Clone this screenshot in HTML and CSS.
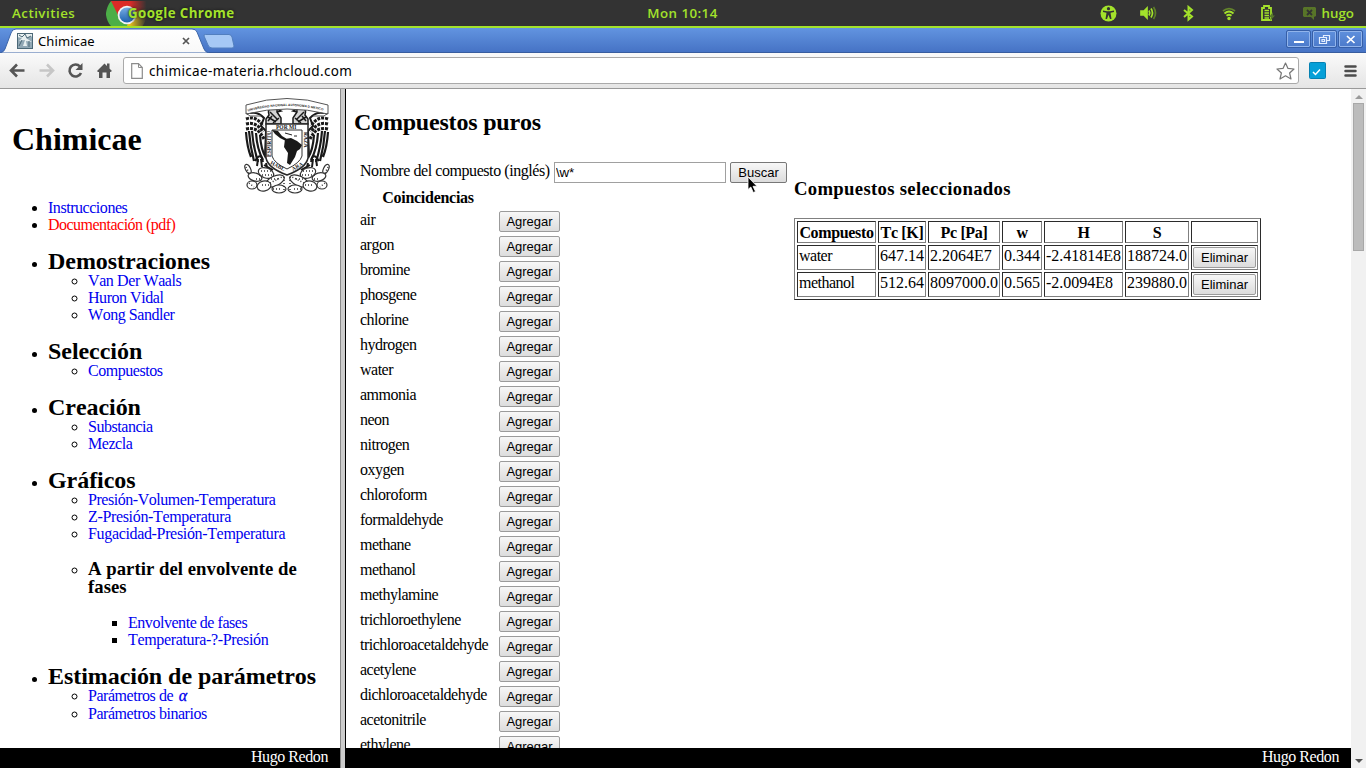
FILE: index.html
```html
<!DOCTYPE html>
<html lang="es">
<head>
<meta charset="utf-8">
<title>Chimicae</title>
<link rel="stylesheet" href="styles.css">
</head>
<body>
<header class="topbar">
  <span class="activities">Activities</span>
  <div class="app">
    <svg class="chrome-logo" width="46" height="25" viewBox="0 0 46 25">
      <defs><linearGradient id="fade"><stop offset="0.52" stop-color="#333" stop-opacity="0"/><stop offset="0.88" stop-color="#333"/></linearGradient>
      <linearGradient id="lens" x2="0" y2="1"><stop offset="0" stop-color="#79aee6"/><stop offset="1" stop-color="#1c60ae"/></linearGradient></defs>
      <circle cx="20.500" cy="13" r="20" fill="#e5c01e"/>
      <path d="M20.500 13 12 19 2 3 10-10H42V7Z" fill="#dc2b27"/>
      <path d="M5 0 14 18 22 22 18 34H0V0Z" fill="#4cae47"/>
      <path d="M0 0H5Q1 5 0 12Z" fill="#333"/><path d="M0 14Q1 21 5 25H0Z" fill="#333"/>
      <circle cx="21" cy="14" r="9.300" fill="#f3f3f3"/><circle cx="21" cy="14" r="7.600" fill="url(#lens)"/>
      <rect width="46" height="25" fill="url(#fade)"/>
    </svg>
    <span class="app-name">Google Chrome</span>
  </div>
  <span class="clock">Mon 10:14</span>
  <div class="tray">
    <svg width="17" height="17" viewBox="0 0 17 17"><circle cx="8.500" cy="8.500" r="8" fill="#a3e22b"/><circle cx="8.500" cy="3.700" r="1.600" fill="#333"/><path d="M3 5.500 7 6.200H10L14 5.500V7L10.500 7.700 11.500 14H10L8.500 9.800 7 14H5.500L6.500 7.700 3 7Z" fill="#333"/></svg>
    <svg width="17" height="16" viewBox="0 0 17 16" fill="none" stroke="#a3e22b" stroke-width="1.700"><path d="M1 6H4L7 3V13L4 10H1Z" fill="#a3e22b"/><path d="M9 5.500Q10.500 8 9 10.500M11 3.500Q14 8 11 12.500"/><path d="M13.500 2Q17.500 8 13.500 14" stroke="#5d7f27"/></svg>
    <svg width="11" height="17" viewBox="0 0 11 17" fill="none" stroke="#a3e22b" stroke-width="2"><path d="M1 5 9 11.500 5.500 14.500V2L9 5 1 12"/></svg>
    <svg width="14" height="15" viewBox="0 0 14 15" fill="none" stroke="#a3e22b" stroke-width="1.800"><path d="M1 5Q7 .2 13 5" stroke="#64852c"/><path d="M2.500 7.500Q7 3.500 11.500 7.500M4.500 9.800Q7 7.800 9.500 9.800"/><circle cx="7" cy="12.500" r="1.700" fill="#a3e22b" stroke="none"/></svg>
    <svg width="14" height="17" viewBox="0 0 14 17"><path d="M1 3H3V1H8V3H10V15H1Z" fill="none" stroke="#a3e22b" stroke-width="1.800"/><path d="M3.500 5.500H8M3.500 8H8M3.500 10.500H8M3.500 13H8" stroke="#a3e22b" stroke-width="1.500"/><path d="M12 7 8 12H10L9 16 14 10.500H12Z" fill="#58772c"/></svg>
    <div class="user"><svg width="15" height="15" viewBox="0 0 15 15"><path d="M2 1H13L14 2V10L12 11V14L9 11H2L1 10V2Z" fill="#587528"/><path d="M5 4 10 9M10 4 5 9" stroke="#333" stroke-width="1.800"/></svg><span>hugo</span></div>
  </div>
</header>

<div class="tabstrip">
  <svg class="tab-shape" width="240" height="25" viewBox="0 0 240 25">
    <defs><linearGradient id="tabfill" x2="0" y2="1"><stop offset="0" stop-color="#fff"/><stop offset="1" stop-color="#f8f8f8"/></linearGradient></defs>
    <path d="M0 25Q4 24 5 21L11 5Q12 1 16 1H192Q196 1 197 4L204 21Q205 24 209 25Z" fill="url(#tabfill)" stroke="#3c65a9"/>
    <path d="M205.500 6.500H229Q231 6.500 232 9L234 18Q234 20 232 20H212Q209 20 208 17L204 8Q203.500 6.500 205.500 6.500Z" fill="#a6c8f5" stroke="#527fbf"/>
  </svg>
  <div class="tab">
    <svg width="16" height="16" viewBox="0 0 16 16"><rect width="16" height="16" fill="#91a8b5"/><path d="M0 1H16V3L9 5 15 9 9 8 10 13H6L8 7 2 8 5 5 0 4Z" fill="#e7eff0"/><path d="M2 2 5 4 8 1 10 5 14 3M5 7 2 13M12 8V14" stroke="#4b6877" fill="none"/><rect x=".5" y=".5" width="15" height="15" fill="none" stroke="#4b6877"/></svg>
    <span class="tab-title">Chimicae</span>
    <svg class="tab-close" width="8" height="8" viewBox="0 0 8 8"><path d="M1 1 7 7M7 1 1 7" stroke="#555" stroke-width="1.700"/></svg>
  </div>
  <div class="window-buttons">
    <span class="wbtn"><svg width="22" height="16"><path d="M6 10H16" stroke="#fff" stroke-width="2"/></svg></span>
    <span class="wbtn"><svg width="22" height="16" fill="none" stroke="#e4efff" stroke-width="1.200"><path d="M9.500 5.500V3.500H15.500V8.500H12.500M5.500 5.500H12.500V11.500H5.500ZM8 7.500H10.500V9.500H8Z"/></svg></span>
    <span class="wbtn"><svg width="22" height="16"><path d="M7 4 14.500 11M14.500 4 7 11" stroke="#fff" stroke-width="1.700"/></svg></span>
  </div>
</div>

<div class="toolbar">
  <svg class="nav" width="112" height="36" viewBox="0 0 112 36" fill="none" stroke="#555" stroke-width="2.600">
    <path d="M24.500 17.500H11.500M17 11.500 11 17.500 17 23.500"/><path d="M39.500 17.500H52.500M47 11.500 53 17.500 47 23.500" stroke="#c6c6c6"/>
    <path d="M80 13.500A6 6 0 1 0 81 20"/><path d="M82.500 10V17H75.500Z" fill="#555" stroke="none"/>
    <path d="M97 18 104.500 10.500 107 13V10.500H109.500V15.500L112 18 110.500 19H110V25H106.500V19.500H102.500V25H99V19H98Z" fill="#555" stroke="none"/>
  </svg>
  <div class="omnibox">
    <svg width="12" height="16" viewBox="0 0 12 16"><path d="M.7.700H7.500L11.300 4.500V15.300H.7Z" fill="#fff" stroke="#8c8c8c" stroke-width="1.200"/><path d="M7.500.700V4.500H11.300" fill="none" stroke="#8c8c8c"/></svg>
    <span class="url">chimicae-materia.rhcloud.com</span>
    <svg class="star" width="19" height="18" viewBox="0 0 19 18"><path d="M9.500 1 12 6.400 18 7 13.600 11 15 17 9.500 13.800 4 17 5.400 11 1 7 7 6.400Z" fill="#fff" stroke="#777" stroke-width="1.200" stroke-linejoin="round"/></svg>
  </div>
  <svg class="ext" width="17" height="17" viewBox="0 0 17 17"><rect x=".5" y=".5" width="16" height="16" rx="1" fill="#06a0d8" stroke="#0581b2"/><path d="M4 10 6.500 12.500 11 7.500" fill="none" stroke="#fff" stroke-width="1.500"/></svg>
  <svg width="13" height="14" viewBox="0 0 13 14"><path d="M1.500 2.500H11.500M1.500 7H11.500M1.500 11.500H11.500" stroke="#4c4c4c" stroke-width="2.500" stroke-linecap="round"/></svg>
</div>

<main class="frames">
  <aside class="side">
    <div class="brand">
      <h1>Chimicae</h1>
      <svg class="crest" width="86" height="98" viewBox="0 0 86 98">
        <defs>
          <path id="motto" d="M4 14.500Q43 3.500 83 14.500"/>
          <g id="wing" fill="none" stroke="#191919">
            <path d="M3 17Q13 13 20 21L17 29 22 34 21 58" stroke-width="2"/>
            <path d="M2 22Q12 18 19 29M2 27Q12 24 19 35M2 32Q14 29 20 42" stroke-width="3" stroke-dasharray="3 1"/>
            <path d="M2 35Q3 50 7 60M5 34Q6 49 10 64M8 34Q9 49 14 65M12 36Q13 52 19 63M16 38Q17 53 22 61" stroke-width="2.200"/>
            <path d="M11 64Q17 54 19 65M14 62 13 69M17 62 18 70M20 68 29 73M18 71 27 77M22 66 25 78" stroke-width="2"/>
            <path d="M25 18Q23 11 29 9 34 9 33 15L37 21V27H22V22Z" fill="#d5d5d5" stroke-width="1.500"/>
            <path d="M33 12 37 14 33 15M24 20 32 25M26 15 34 23M24 24 28 19M29 26 35 21" stroke-width="1.500"/>
          </g>
          <g id="cactus" fill="#fff" stroke="#333" stroke-width="1.200">
            <ellipse cx="4" cy="72" rx="2.500" ry="5" transform="rotate(-25 4 72)"/><ellipse cx="11" cy="80" rx="7" ry="4" transform="rotate(15 11 80)"/><ellipse cx="22" cy="76" rx="8" ry="5" transform="rotate(20 22 76)"/><ellipse cx="31" cy="84" rx="10" ry="5" transform="rotate(-25 31 84)"/><ellipse cx="8" cy="88" rx="5" ry="4"/><ellipse cx="20" cy="89" rx="7" ry="5" transform="rotate(-12 20 89)"/><ellipse cx="35" cy="92" rx="7" ry="4"/>
            <path d="M2 70 5 76M5 86 10 90M17 74H27M15 78H29M12 82H18M18 88H25M26 86 38 80M29 92H38M24 82H34M40 80V94" stroke-width="1.500" stroke-dasharray="1 2"/>
          </g>
        </defs>
        <use href="#wing"/><use href="#wing" transform="matrix(-1 0 0 1 86 0)"/>
        <use href="#cactus"/><use href="#cactus" transform="matrix(-1 0 0 1 86 0)"/>
        <path d="M2 8Q43-5 84 8V17Q43 7 2 17ZM2 16 6 19 17 19M84 16 80 19 69 19" fill="#fff" stroke="#555"/>
        <text class="crest-banner"><textPath href="#motto">UNIVERSIDAD NACIONAL AUTONOMA D MEXICO</textPath></text>
        <path d="M22 27H64V61Q62 71 43 78 24 71 22 61Z" fill="#fff" stroke="#292929" stroke-width="1.500"/>
        <path d="M28 33H58V59Q56 66 43 72 30 66 28 59Z" fill="#fff" stroke="#333"/>
        <path d="M28 33 34 34 38 39 43 42 42 44 36 41 31 37ZM41 42 47 41 53 44 58 48 56 52 53 54 51 60 46 68 43 66 44 56 40 50Z" fill="#191919"/>
        <path d="M41 36 48 38M50 39H53" stroke="#222"/>
        <text class="crest-text" x="32" y="32.300">POR  MI</text>
        <text class="crest-text" transform="translate(59.500 35) rotate(90)">RAZA</text>
        <text class="crest-text" transform="translate(26.500 60) rotate(-90)">ESPIRITU</text>
        <text class="crest-text" transform="translate(26 67) rotate(27)">HABL</text>
        <text class="crest-text" transform="translate(49 74) rotate(-30)">ARA</text>
      </svg>
    </div>
    <ul class="menu">
      <li><a>Instrucciones</a></li>
      <li><a class="red">Documentación (pdf)</a></li>
      <li class="section"><h2>Demostraciones</h2><ul><li><a class="roomy">Van Der Waals</a></li><li><a>Huron Vidal</a></li><li><a>Wong Sandler</a></li></ul></li>
      <li class="section"><h2>Selección</h2><ul><li><a>Compuestos</a></li></ul></li>
      <li class="section"><h2>Creación</h2><ul><li><a>Substancia</a></li><li><a>Mezcla</a></li></ul></li>
      <li class="section"><h2>Gráficos</h2><ul><li><a>Presión-Volumen-Temperatura</a></li><li><a class="wide">Z-Presión-Temperatura</a></li><li><a class="wide">Fugacidad-Presión-Temperatura</a></li>
        <li class="subsection"><h3>A partir del envolvente de fases</h3><ul><li><a>Envolvente de fases</a></li><li><a class="wide">Temperatura-?-Presión</a></li></ul></li></ul></li>
      <li class="section"><h2>Estimación de parámetros</h2><ul><li class="alpha"><a>Parámetros de <i>α</i></a></li><li><a>Parámetros binarios</a></li></ul></li>
    </ul>
    <footer class="foot">Hugo Redon</footer>
  </aside>
  <div class="divider"></div>
  <section class="content">
    <h2 class="page-title">Compuestos puros</h2>
    <div class="columns">
      <div class="search">
        <div class="search-row"><label>Nombre del compuesto (inglés)</label><input type="text" value="\w*"><button class="find">Buscar</button></div>
        <div class="matches-title">Coincidencias</div>
        <div class="match"><span>air</span><button>Agregar</button></div>
        <div class="match"><span>argon</span><button>Agregar</button></div>
        <div class="match"><span>bromine</span><button>Agregar</button></div>
        <div class="match"><span>phosgene</span><button>Agregar</button></div>
        <div class="match"><span>chlorine</span><button>Agregar</button></div>
        <div class="match"><span>hydrogen</span><button>Agregar</button></div>
        <div class="match"><span>water</span><button>Agregar</button></div>
        <div class="match"><span>ammonia</span><button>Agregar</button></div>
        <div class="match"><span>neon</span><button>Agregar</button></div>
        <div class="match"><span>nitrogen</span><button>Agregar</button></div>
        <div class="match"><span>oxygen</span><button>Agregar</button></div>
        <div class="match"><span>chloroform</span><button>Agregar</button></div>
        <div class="match"><span>formaldehyde</span><button>Agregar</button></div>
        <div class="match"><span>methane</span><button>Agregar</button></div>
        <div class="match"><span>methanol</span><button>Agregar</button></div>
        <div class="match"><span>methylamine</span><button>Agregar</button></div>
        <div class="match"><span>trichloroethylene</span><button>Agregar</button></div>
        <div class="match"><span>trichloroacetaldehyde</span><button>Agregar</button></div>
        <div class="match"><span>acetylene</span><button>Agregar</button></div>
        <div class="match"><span>dichloroacetaldehyde</span><button>Agregar</button></div>
        <div class="match"><span>acetonitrile</span><button>Agregar</button></div>
        <div class="match"><span>ethylene</span><button>Agregar</button></div>
      </div>
      <div class="selected">
        <h3>Compuestos seleccionados</h3>
        <table>
          <colgroup><col class="c1"><col class="c2"><col class="c3"><col class="c4"><col class="c5"><col class="c6"><col class="c7"></colgroup>
          <tr><th>Compuesto</th><th>Tc [K]</th><th>Pc [Pa]</th><th>w</th><th>H</th><th>S</th><th></th></tr>
          <tr><td class="name">water</td><td>647.14</td><td>2.2064E7</td><td>0.344</td><td>-2.41814E8</td><td>188724.0</td><td><button>Eliminar</button></td></tr>
          <tr><td class="name">methanol</td><td>512.64</td><td>8097000.0</td><td>0.565</td><td>-2.0094E8</td><td>239880.0</td><td><button>Eliminar</button></td></tr>
        </table>
      </div>
    </div>
    <footer class="foot">Hugo Redon</footer>
  </section>
  <div class="scrollbar"><i class="up"></i><div class="thumb"></div><i class="down"></i></div>
</main>
<svg class="pointer" width="12" height="18" viewBox="0 0 12 18"><path d="M1 1V13.500L3.800 11 6.300 16.500 8.500 15.500 6 10.300H10Z" fill="#000" stroke="#fff" stroke-width=".8"/></svg>
</body>
</html>
```
FILE: styles.css
```css
* { box-sizing: border-box; }
body { margin: 0; width: 1366px; height: 768px; overflow: hidden; display: flex; flex-direction: column; background: #fff; color: #000; font: 16px/17px "Liberation Serif", serif; font-kerning: none; }
svg { display: block; flex: none; }

.topbar { height: 28px; flex: none; display: grid; grid-template-columns: 106px 494px 165px 1fr; align-items: center; background: #333; border-bottom: 2px solid #a3e22b; color: #a3e22b; font: 600 13.300px/26px "Open Sans", sans-serif; }
.activities { padding-left: 12px; letter-spacing: 0.500px; }
.app { display: flex; align-items: center; }
.app-name { margin-left: -24px; font-weight: 700; letter-spacing: 0.400px; text-shadow: 0 0 3px #111; white-space: nowrap; }
.clock { text-align: center; letter-spacing: 0.450px; }
.tray { display: flex; align-items: center; justify-content: flex-end; padding-right: 12px; }
.tray > svg:nth-child(1) { margin-right: 23px; }
.tray > svg:nth-child(2) { margin-right: 26px; }
.tray > svg:nth-child(3) { margin-right: 28px; }
.tray > svg:nth-child(4) { margin-right: 25px; }
.tray > svg:nth-child(5) { margin-right: 27px; }
.user { display: flex; align-items: center; gap: 5px; }

.tabstrip { height: 25px; flex: none; display: grid; grid-template-columns: 240px 1fr; background: linear-gradient(#6294e0, #4673c5); border-bottom: 1px solid #385d9f; font: 13px/22px "Noto Sans", sans-serif; }
.tab-shape { grid-area: 1 / 1; }
.tab { grid-area: 1 / 1; z-index: 1; display: flex; align-items: center; padding: 1px 0 0 17px; height: 25px; }
.tab-title { margin-left: 5px; width: 144px; letter-spacing: 0.100px; }
.window-buttons { grid-area: 1 / 2; display: flex; justify-content: flex-end; gap: 3px; padding: 3px 4px 0 0; }
.wbtn { width: 23px; height: 16px; border: 1px solid #91b4eb; outline: 1px solid #365fa8; border-radius: 1px; }

.toolbar { height: 36px; flex: none; display: flex; align-items: center; background: linear-gradient(#fafafa, #e5e5e5); border-bottom: 1px solid #999; padding-right: 9px; }
.nav { width: 112px; }
.omnibox { margin: 0 10px 0 11px; width: 1176px; height: 27px; display: flex; align-items: center; background: #fff; border: 1px solid #aaa; border-radius: 3px; padding: 0 3px 0 7px; }
.url { flex: 1; margin-left: 6px; font: 13.500px/22px "Noto Sans", sans-serif; letter-spacing: 0.370px; }
.ext { margin-right: 18px; }

.frames { flex: 1; min-height: 0; display: grid; grid-template-columns: 340px 6px 1005px 15px; }
.side, .content { position: relative; overflow: hidden; }
.divider { background: #ccc; border-left: 1px solid #888; border-right: 1px solid #000; }
.brand { display: flex; justify-content: space-between; height: 110px; padding: 8px 10px 0 12px; }
h1 { margin: 24px 0 0; font-size: 32px; line-height: 36px; }
ul { margin: 0; padding-left: 40px; }
.menu { padding-left: 48px; letter-spacing: -0.460px; }
.section > ul { margin-top: -1px; }
a { color: #00e; }
a.red { color: #f00; letter-spacing: -0.520px; }
a.roomy { letter-spacing: -0.400px; }
a.wide { letter-spacing: -0.340px; }
.menu h2 { margin: 17px 0 0; font-size: 24px; line-height: 23px; letter-spacing: -0.050px; white-space: nowrap; }
.subsection h3 { margin: 18px 0 18px; font-size: 18.720px; line-height: 18px; letter-spacing: 0.040px; width: 230px; }
.alpha { height: 18px; }
.alpha i { margin-left: 2px; font-size: 16px; line-height: 16px; -webkit-text-stroke: 0.300px #00e; }
.foot { position: absolute; left: 0; right: 0; bottom: 0; height: 20px; padding: 0 12px 0 0; text-align: right; line-height: 17px; letter-spacing: -0.430px; color: #fff; background: #000; }

.page-title { margin: 20px 0 0 8px; font-size: 24px; line-height: 27px; letter-spacing: -0.200px; }
.columns { display: grid; grid-template-columns: 448px 1fr; height: 600px; }
.search { padding: 26px 0 0 14px; letter-spacing: -0.500px; }
.search-row { display: flex; height: 21px; margin-bottom: 6px; }
.search-row label { width: 194px; white-space: nowrap; letter-spacing: -0.430px; }
input { width: 172px; height: 21px; margin: 0 4px 0 0; padding: 1px 1px; border: 1px solid #a0a0a0; font: 13.300px "Liberation Sans", sans-serif; letter-spacing: -0.200px; }
button { width: 61px; height: 21px; margin: 0; padding: 0 0 1px; border: 1px solid #9b9b9b; border-radius: 2px; background: linear-gradient(#f7f7f7, #dcdcdc); color: #000; font: 13px/17px "Liberation Sans", sans-serif; letter-spacing: 0; text-align: center; }
button.find { width: 57px; border-color: #777; }
.matches-title { width: 136px; height: 22px; line-height: 18px; text-align: center; font-weight: 700; letter-spacing: -0.280px; }
.match { display: flex; height: 25px; }
.match span { width: 139px; }
.selected { padding-top: 42px; }
.selected h3 { margin: 0 0 19px; font-size: 18.720px; line-height: 21px; letter-spacing: 0.310px; }
table { width: 467px; table-layout: fixed; border-collapse: separate; border-spacing: 2px; border: 1px solid; border-color: #808080 #2b2b2b #2b2b2b #808080; line-height: 17px; }
th, td { height: 25px; padding: 1px; border: 1px solid; border-color: #2b2b2b #808080 #808080 #2b2b2b; vertical-align: top; white-space: nowrap; }
th { height: 22px; letter-spacing: -0.350px; vertical-align: middle; }
td.name { letter-spacing: -0.500px; }
td button { width: 63px; }
.c1 { width: 79px; } .c2 { width: 48px; } .c3 { width: 72px; } .c4 { width: 40px; } .c5 { width: 79px; } .c6 { width: 64px; } .c7 { width: 67px; }

.scrollbar { background: #f1f1f1; display: flex; flex-direction: column; align-items: center; padding: 6px 0 5px; }
.scrollbar i { border: 4px solid transparent; }
.scrollbar .up { border-top: 0; border-bottom-color: #9b9b9b; }
.scrollbar .down { border-bottom: 0; border-top-color: #505050; margin-top: auto; }
.thumb { width: 11px; height: 148px; margin-top: 4px; background: #bcbcbc; border: 1px solid #a8a8a8; }
.crest-banner { font: 700 3.200px "Liberation Sans", sans-serif; fill: #222; }
.crest-text { font: 700 5.500px "Liberation Serif", serif; fill: #222; }
.pointer { position: absolute; left: 747px; top: 176px; }
```
